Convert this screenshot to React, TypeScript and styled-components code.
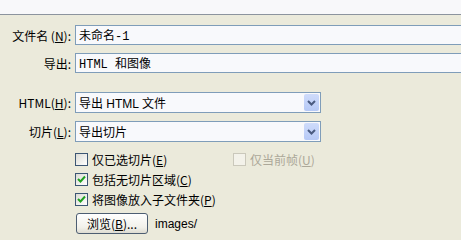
import styled, { createGlobalStyle } from "styled-components";

const GlobalStyle = createGlobalStyle`
  body {
    margin: 0;
    background: #ebeadb;
    font-family: "Liberation Sans", "Noto Sans CJK SC", sans-serif;
    font-size: 12px;
    color: #000;
    overflow: hidden;
  }
`;

const TopStrip = styled.div`
  height: 14px;
  background: #f8f8fa;
  border-bottom: 1px solid #8c949e;
`;

const Form = styled.div`
  display: flex;
  flex-direction: column;
  padding-top: 10px;
`;

const Row = styled.div<{ $top?: number }>`
  display: flex;
  align-items: center;
  margin-top: ${(p) => p.$top ?? 0}px;
`;

const Label = styled.div`
  width: 75px;
  box-sizing: border-box;
  padding-right: 4px;
  text-align: right;
  white-space: nowrap;
  font-family: "Noto Sans CJK SC", sans-serif;
  font-size: 12px;
`;

const Key = styled.span`
  text-decoration: underline;
`;

const TextBox = styled.div`
  flex: 1;
  height: 20px;
  box-sizing: border-box;
  margin-right: -2px;
  border: 1px solid #7f9db9;
  background: #f8f9fc;
  display: flex;
  align-items: center;
  padding-left: 3px;
  font-family: "Liberation Mono", "Noto Sans CJK SC", monospace;
  font-size: 12px;
`;

const Select = styled.div`
  width: 246px;
  height: 21px;
  box-sizing: border-box;
  border: 1px solid #7f9db9;
  background: #f8f9fc;
  display: flex;
  align-items: center;
  justify-content: space-between;
  padding: 1px 1px 1px 3px;
`;

const SelectText = styled.span`
  font-family: "Liberation Sans", "Noto Sans CJK SC", sans-serif;
  font-size: 12px;
`;

const DropButton = styled.div`
  width: 15px;
  height: 17px;
  border-radius: 2px;
  background: linear-gradient(#cfdcfb, #b6c9f6);
  display: flex;
  align-items: center;
  justify-content: center;
`;

const CheckGroup = styled.div`
  display: flex;
  flex-direction: column;
  margin-top: 7px;
  margin-left: 75px;
`;

const CheckRow = styled.div`
  height: 20px;
  display: flex;
  align-items: center;
`;

const CheckItem = styled.label<{ $width?: number; $disabled?: boolean }>`
  display: flex;
  align-items: center;
  gap: 4px;
  width: ${(p) => (p.$width ? `${p.$width}px` : "auto")};
  color: ${(p) => (p.$disabled ? "#aca899" : "#000")};
  font-family: "Noto Sans CJK SC", sans-serif;
  font-size: 12px;
  white-space: nowrap;
`;

const Box = styled.span<{ $disabled?: boolean }>`
  width: 13px;
  height: 13px;
  box-sizing: border-box;
  border: 1px solid ${(p) => (p.$disabled ? "#cac8bb" : "#3c5674")};
  background: ${(p) =>
    p.$disabled ? "#f3f2ea" : "linear-gradient(135deg, #dcdcd6, #ffffff)"};
  display: flex;
  align-items: center;
  justify-content: center;
`;

const BrowseRow = styled.div`
  display: flex;
  align-items: center;
  gap: 7px;
  margin-top: 4px;
  margin-left: 76px;
`;

const Button = styled.div`
  width: 72px;
  height: 21px;
  box-sizing: border-box;
  border: 1px solid #4d5e72;
  border-radius: 3px;
  background: linear-gradient(#ffffff, #f2f1ea 70%, #dedcd2);
  display: flex;
  align-items: center;
  justify-content: center;
  font-family: "Noto Sans CJK SC", sans-serif;
  font-size: 12px;
`;

const PathText = styled.span`
  font-family: "Liberation Sans", sans-serif;
  font-size: 12px;
`;

const Chevron = () => (
  <svg width="9" height="6" viewBox="0 0 9 6">
    <path d="M1 1 L4.5 4.5 L8 1" fill="none" stroke="#4a5b80" strokeWidth="2" />
  </svg>
);

const Tick = () => (
  <svg width="9" height="8" viewBox="0 0 9 8">
    <path d="M1 4 L3.5 6.5 L8 1.5" fill="none" stroke="#21a121" strokeWidth="2" />
  </svg>
);

const Check = ({
  label,
  hotkey,
  checked,
  disabled,
  width,
}: {
  label: string;
  hotkey: string;
  checked?: boolean;
  disabled?: boolean;
  width?: number;
}) => (
  <CheckItem $width={width} $disabled={disabled}>
    <Box $disabled={disabled}>{checked && <Tick />}</Box>
    <span>
      {label}(<Key>{hotkey}</Key>)
    </span>
  </CheckItem>
);

export default function App() {
  return (
    <>
      <GlobalStyle />
      <TopStrip />
      <Form>
        <Row>
          <Label>
            文件名 (<Key>N</Key>):
          </Label>
          <TextBox>未命名-1</TextBox>
        </Row>
        <Row $top={8}>
          <Label>导出:</Label>
          <TextBox>HTML 和图像</TextBox>
        </Row>
        <Row $top={19}>
          <Label>
            HTML(<Key>H</Key>):
          </Label>
          <Select>
            <SelectText>导出 HTML 文件</SelectText>
            <DropButton>
              <Chevron />
            </DropButton>
          </Select>
        </Row>
        <Row $top={8}>
          <Label>
            切片(<Key>L</Key>):
          </Label>
          <Select>
            <SelectText>导出切片</SelectText>
            <DropButton>
              <Chevron />
            </DropButton>
          </Select>
        </Row>
        <CheckGroup>
          <CheckRow>
            <Check label="仅已选切片" hotkey="E" width={158} />
            <Check label="仅当前帧" hotkey="U" disabled />
          </CheckRow>
          <CheckRow>
            <Check label="包括无切片区域" hotkey="C" checked />
          </CheckRow>
          <CheckRow>
            <Check label="将图像放入子文件夹" hotkey="P" checked />
          </CheckRow>
        </CheckGroup>
        <BrowseRow>
          <Button>
            浏览(<Key>B</Key>)...
          </Button>
          <PathText>images/</PathText>
        </BrowseRow>
      </Form>
    </>
  );
}
